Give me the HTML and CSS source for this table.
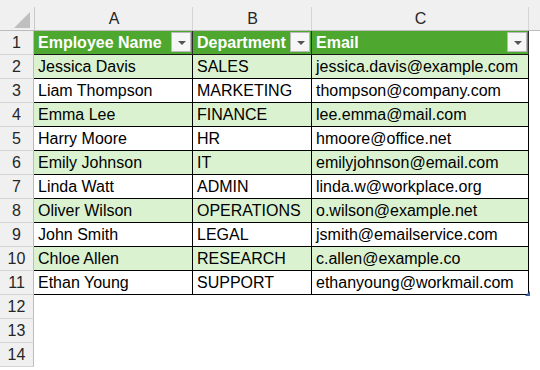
FILE: index.html
```html
<!DOCTYPE html>
<html>
<head>
<meta charset="utf-8">
<link rel="stylesheet" href="styles.css">
</head>
<body>
<div class="sheet">
  <div class="corner"><svg width="34" height="31" viewBox="0 0 34 31"><polygon points="14,28 30,12 30,28" fill="#bfbfbf"/></svg></div>
  <div class="colhead"><span>A</span></div>
  <div class="colhead"><span>B</span></div>
  <div class="colhead"><span>C</span></div>
  <div class="colhead last"><span></span></div>

  <div class="rowhead">1</div>
  <div class="cell th">Employee Name<span class="filter"></span></div>
  <div class="cell th">Department<span class="filter"></span></div>
  <div class="cell th">Email<span class="filter"></span></div>
  <div class="cell blank"></div>

  <div class="rowhead">2</div>
  <div class="cell td alt">Jessica Davis</div>
  <div class="cell td alt">SALES</div>
  <div class="cell td alt">jessica.davis@example.com</div>
  <div class="cell blank"></div>

  <div class="rowhead">3</div>
  <div class="cell td">Liam Thompson</div>
  <div class="cell td">MARKETING</div>
  <div class="cell td">thompson@company.com</div>
  <div class="cell blank"></div>

  <div class="rowhead">4</div>
  <div class="cell td alt">Emma Lee</div>
  <div class="cell td alt">FINANCE</div>
  <div class="cell td alt">lee.emma@mail.com</div>
  <div class="cell blank"></div>

  <div class="rowhead">5</div>
  <div class="cell td">Harry Moore</div>
  <div class="cell td">HR</div>
  <div class="cell td">hmoore@office.net</div>
  <div class="cell blank"></div>

  <div class="rowhead">6</div>
  <div class="cell td alt">Emily Johnson</div>
  <div class="cell td alt">IT</div>
  <div class="cell td alt">emilyjohnson@email.com</div>
  <div class="cell blank"></div>

  <div class="rowhead">7</div>
  <div class="cell td">Linda Watt</div>
  <div class="cell td">ADMIN</div>
  <div class="cell td">linda.w@workplace.org</div>
  <div class="cell blank"></div>

  <div class="rowhead">8</div>
  <div class="cell td alt">Oliver Wilson</div>
  <div class="cell td alt">OPERATIONS</div>
  <div class="cell td alt">o.wilson@example.net</div>
  <div class="cell blank"></div>

  <div class="rowhead">9</div>
  <div class="cell td">John Smith</div>
  <div class="cell td">LEGAL</div>
  <div class="cell td">jsmith@emailservice.com</div>
  <div class="cell blank"></div>

  <div class="rowhead">10</div>
  <div class="cell td alt">Chloe Allen</div>
  <div class="cell td alt">RESEARCH</div>
  <div class="cell td alt">c.allen@example.co</div>
  <div class="cell blank"></div>

  <div class="rowhead">11</div>
  <div class="cell td">Ethan Young</div>
  <div class="cell td">SUPPORT</div>
  <div class="cell td handle-cell">ethanyoung@workmail.com<span class="handle"></span></div>
  <div class="cell blank"></div>

  <div class="rowhead">12</div>
  <div class="cell blank"></div><div class="cell blank"></div><div class="cell blank"></div><div class="cell blank"></div>
  <div class="rowhead">13</div>
  <div class="cell blank"></div><div class="cell blank"></div><div class="cell blank"></div><div class="cell blank"></div>
  <div class="rowhead">14</div>
  <div class="cell blank"></div><div class="cell blank"></div><div class="cell blank"></div><div class="cell blank"></div>
</div>
</body>
</html>
```

FILE: styles.css
```css
html, body {
  margin: 0;
  padding: 0;
  background: #ffffff;
}
body {
  width: 540px;
  height: 370px;
  overflow: hidden;
  font-family: "Liberation Sans", Arial, sans-serif;
  font-size: 16px;
  color: #000;
}
.sheet {
  display: grid;
  grid-template-columns: 34px 159px 119px 217px 1fr;
  grid-template-rows: 31px repeat(14, 24px);
}
.corner {
  background: #f0f0f0;
  border-bottom: 1px solid #bdbdbd;
  box-sizing: border-box;
  display: flex;
}
.corner svg { display: block; }
.colhead {
  background: #f0f0f0;
  border-bottom: 1px solid #bdbdbd;
  box-sizing: border-box;
  padding-top: 7px;
  display: flex;
}
.colhead span {
  flex: 1;
  border-left: 1px solid #d4d4d4;
  display: flex;
  align-items: center;
  justify-content: center;
  font-size: 16px;
  color: #262626;
  margin-left: -1px;
}
.colhead:nth-child(2) span { margin-left: 0; border-left-color: #c8c8c8; }
.rowhead {
  background: #f0f0f0;
  border-right: 1px solid #bdbdbd;
  border-bottom: 1px solid #d4d4d4;
  box-sizing: border-box;
  display: flex;
  align-items: center;
  justify-content: center;
  font-size: 16px;
  color: #262626;
}
.cell {
  box-sizing: border-box;
  display: flex;
  align-items: center;
  padding-left: 4px;
  white-space: nowrap;
  overflow: hidden;
  position: relative;
}
.th {
  background: #4ea72e;
  color: #ffffff;
  font-weight: bold;
  border-right: 1px solid #2b2b2b;
  border-bottom: 1px solid #1a1a1a;
}
.td {
  border-right: 1px solid #000;
  border-bottom: 1px solid #000;
}
.alt {
  background: #daf2d0;
}
.filter {
  position: absolute;
  right: 1px;
  top: 1px;
  width: 20px;
  height: 20px;
  box-sizing: border-box;
  background: #f6f6f6;
  border: 1px solid #b9b9b9;
}
.filter::after {
  content: "";
  position: absolute;
  left: 6px;
  top: 8px;
  border-left: 4px solid transparent;
  border-right: 4px solid transparent;
  border-top: 4px solid #555;
}
.handle-cell { overflow: visible; }
.handle {
  position: absolute;
  right: -2px;
  bottom: -2px;
  width: 0;
  height: 0;
  border-left: 5px solid transparent;
  border-bottom: 5px solid #3b5ea8;
}
```
